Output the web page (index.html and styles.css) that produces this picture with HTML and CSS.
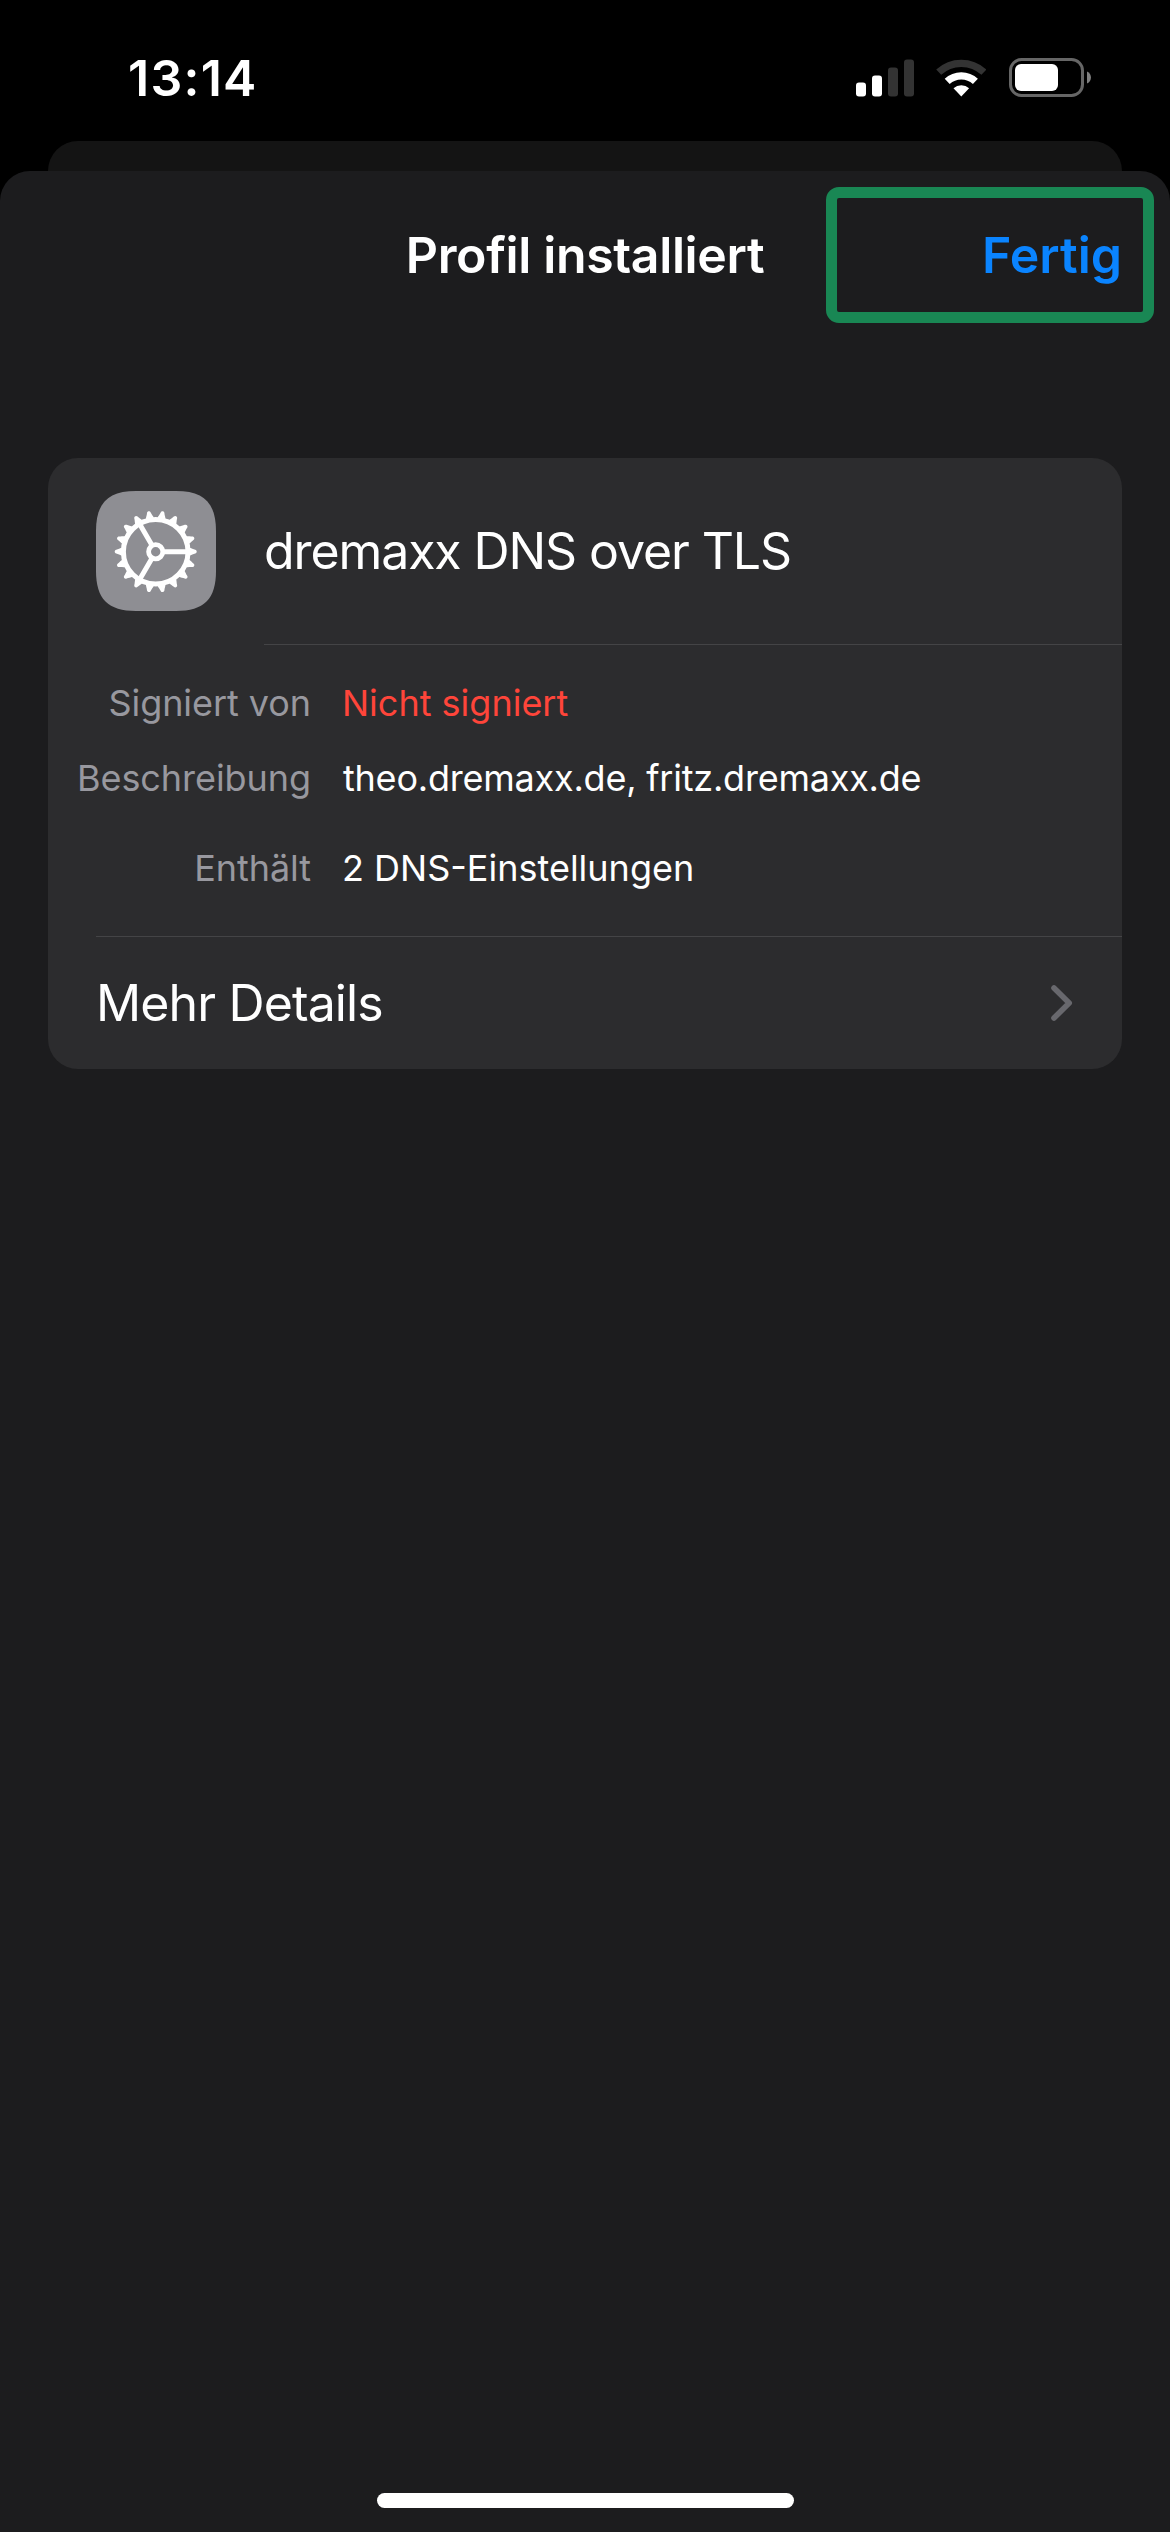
FILE: index.html
```html
<!DOCTYPE html>
<html lang="de">
<head>
<meta charset="utf-8">
<title>Profil installiert</title>
<link rel="stylesheet" href="styles.css">
</head>
<body>
<div class="screen">
  <header class="status">
    <time class="clock">13:14</time>
    <svg class="signal" width="58" height="38" viewBox="0 0 58 38"><g fill="#fff"><rect x="0" y="23.5" width="10" height="14" rx="3"/><rect x="16" y="16.5" width="10" height="21" rx="3"/></g><g fill="#333"><rect x="32" y="8.5" width="10" height="29" rx="3"/><rect x="48" y="0.5" width="10" height="37" rx="3"/></g></svg>
    <svg class="wifi" width="50" height="38" viewBox="-25.3 -37.5 50 38"><path d="M-22.6-24.3A33.2 33.2 0 0 1 22.6-24.3" fill="none" stroke="#333" stroke-width="7.3"/><path d="M-14.1-15.1A20.7 20.7 0 0 1 14.1-15.1" fill="none" stroke="#fff" stroke-width="7.3"/><path d="M0 0L-7.8-8.2A11.4 11.4 0 0 1 7.8-8.2Z" fill="#fff"/></svg>
    <svg class="battery" width="83" height="39" viewBox="0 0 83 39"><rect x="1.5" y="1.5" width="72" height="36" rx="11" fill="none" stroke="#666" stroke-width="3"/><rect x="6" y="6" width="43" height="27" rx="6" fill="#fff"/><path d="M78 13.5C83.3 15.5 83.3 23.5 78 25.5Z" fill="#808080"/></svg>
  </header>
  <div class="backsheet"></div>
  <main class="sheet">
    <div class="navbar">
      <h1 class="title">Profil installiert</h1>
      <div class="highlight"><span class="done">Fertig</span></div>
    </div>
    <section class="card">
      <div class="profile">
        <svg class="app-icon" width="120" height="120" viewBox="-60 -60 120 120">
          <defs>
            <path id="tooth" d="M33-4.200C36-3.700 37.500-2.300 39.500-1.900C41.500-1.400 41.500 1.400 39.500 1.900C37.500 2.300 36 3.700 33 4.200Z"/>
            <g id="teeth3"><use href="#tooth"/><use href="#tooth" transform="rotate(20)"/><use href="#tooth" transform="rotate(40)"/></g>
          </defs>
          <path d="M-60-20C-60-48-48-60-20-60H20C48-60 60-48 60-20V20C60 48 48 60 20 60H-20C-48 60-60 48-60 20Z" fill="#8e8e93"/>
          <g transform="translate(-0.300 0.700)">
            <g fill="#fff">
              <use href="#teeth3"/>
              <use href="#teeth3" transform="rotate(60)"/>
              <use href="#teeth3" transform="rotate(120)"/>
              <use href="#teeth3" transform="rotate(180)"/>
              <use href="#teeth3" transform="rotate(240)"/>
              <use href="#teeth3" transform="rotate(300)"/>
            </g>
            <circle r="32.300" fill="none" stroke="#fff" stroke-width="5"/>
            <circle r="7.100" fill="none" stroke="#fff" stroke-width="4.800"/>
            <path d="M8 0H31M-4-6.930L-15.500-26.800M-4 6.930L-15.500 26.800" stroke="#fff" stroke-width="5"/>
          </g>
        </svg>
        <div class="name">dremaxx DNS over TLS</div>
      </div>
      <dl class="facts">
        <dt>Signiert von</dt><dd class="warn">Nicht signiert</dd>
        <dt>Beschreibung</dt><dd class="description">theo.dremaxx.de, fritz.dremaxx.de</dd>
        <dt class="last">Enthält</dt><dd class="last">2 DNS-Einstellungen</dd>
      </dl>
      <a class="more"><span>Mehr Details</span><svg width="23" height="36" viewBox="0 0 23 36"><path d="M3 3L18.200 18L3 33" fill="none" stroke="#68686d" stroke-width="5.600" stroke-linecap="round" stroke-linejoin="round"/></svg></a>
    </section>
    <div class="home"></div>
  </main>
</div>
</body>
</html>
```
FILE: styles.css
```css
* { box-sizing: border-box; margin: 0; padding: 0; }
body { background: #000; color: #fff; font-family: Inter, "Liberation Sans", sans-serif; }
.screen { display: flex; flex-direction: column; width: 1170px; height: 2532px; background: #000; overflow: hidden; }
.status { display: flex; align-items: flex-start; height: 141px; padding: 48px 78px 0 128px; }
.clock { flex: 1; font-size: 50px; font-weight: 600; line-height: 60px; letter-spacing: 1.25px; }
.signal { margin: 10.5px 22px 0 0; }
.wifi { margin: 10.5px 23px 0 0; }
.battery { margin-top: 10px; }
.backsheet { height: 30px; margin: 0 48px; border-radius: 30px 30px 0 0; background: #141414; }
.sheet { display: flex; flex: 1; flex-direction: column; border-radius: 30px 30px 0 0; background: #1c1c1e; }
.navbar { display: grid; grid-template-columns: 1fr auto 1fr; align-items: center; height: 168px; padding: 0 16px; }
.title { grid-column: 2; font-size: 50px; font-weight: 600; line-height: 60px; letter-spacing: -0.36px; white-space: nowrap; }
.highlight { display: flex; align-items: center; justify-content: flex-end; justify-self: end; width: 328px; height: 136px; padding-right: 21px; border: 11px solid #198754; border-radius: 13px; }
.done { color: #0a84ff; font-size: 50px; font-weight: 600; line-height: 60px; }
.card { margin: 119px 48px 0; border-radius: 30px; background: #2c2c2e; }
.profile { display: flex; align-items: center; height: 187px; padding-left: 48px; }
.app-icon { margin-bottom: 1px; }
.name { flex: 1; height: 187px; margin-left: 48px; border-bottom: 1px solid #444446; font-size: 50px; line-height: 187px; letter-spacing: -1.1px; }
.facts { display: grid; grid-template-columns: 263px 1fr; column-gap: 31px; row-gap: 29px; height: 291px; padding-top: 35px; align-content: start; font-size: 36px; line-height: 46px; }
.facts dt { color: #98989f; letter-spacing: -0.06px; text-align: right; }
.facts .warn { color: #ff453a; }
.facts .description { padding-left: 1px; letter-spacing: -0.22px; }
.facts .last { margin-top: 15px; }
.more { display: flex; align-items: center; justify-content: space-between; height: 133px; margin-left: 48px; padding-right: 48px; border-top: 1px solid #444446; font-size: 50px; letter-spacing: -0.87px; }
.home { width: 417px; height: 15px; margin: auto auto 24px; border-radius: 8px; background: #fff; }
```
